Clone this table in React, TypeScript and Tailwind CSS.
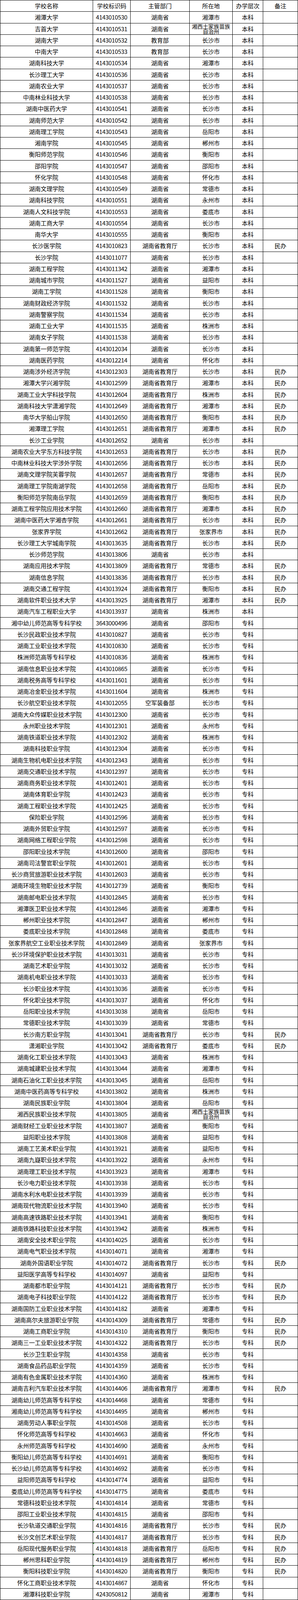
import React from 'react';

type Row = [string, string, string, string, string, string?];

const P = '湖南省';
const E = '湖南省教育厅';
const XX = '湘西土家族苗族自治州';

const rows: Row[] = [
  ['湘潭大学', '4143010530', P, '湘潭市', '本科'],
  ['吉首大学', '4143010531', P, XX, '本科'],
  ['湖南大学', '4143010532', '教育部', '长沙市', '本科'],
  ['中南大学', '4143010533', '教育部', '长沙市', '本科'],
  ['湖南科技大学', '4143010534', P, '湘潭市', '本科'],
  ['长沙理工大学', '4143010536', P, '长沙市', '本科'],
  ['湖南农业大学', '4143010537', P, '长沙市', '本科'],
  ['中南林业科技大学', '4143010538', P, '长沙市', '本科'],
  ['湖南中医药大学', '4143010541', P, '长沙市', '本科'],
  ['湖南师范大学', '4143010542', P, '长沙市', '本科'],
  ['湖南理工学院', '4143010543', P, '岳阳市', '本科'],
  ['湘南学院', '4143010545', P, '郴州市', '本科'],
  ['衡阳师范学院', '4143010546', P, '衡阳市', '本科'],
  ['邵阳学院', '4143010547', P, '邵阳市', '本科'],
  ['怀化学院', '4143010548', P, '怀化市', '本科'],
  ['湖南文理学院', '4143010549', P, '常德市', '本科'],
  ['湖南科技学院', '4143010551', P, '永州市', '本科'],
  ['湖南人文科技学院', '4143010553', P, '娄底市', '本科'],
  ['湖南工商大学', '4143010554', P, '长沙市', '本科'],
  ['南华大学', '4143010555', P, '衡阳市', '本科'],
  ['长沙医学院', '4143010823', E, '长沙市', '本科', '民办'],
  ['长沙学院', '4143011077', P, '长沙市', '本科'],
  ['湖南工程学院', '4143011342', P, '湘潭市', '本科'],
  ['湖南城市学院', '4143011527', P, '益阳市', '本科'],
  ['湖南工学院', '4143011528', P, '衡阳市', '本科'],
  ['湖南财政经济学院', '4143011532', P, '长沙市', '本科'],
  ['湖南警察学院', '4143011534', P, '长沙市', '本科'],
  ['湖南工业大学', '4143011535', P, '株洲市', '本科'],
  ['湖南女子学院', '4143011538', P, '长沙市', '本科'],
  ['湖南第一师范学院', '4143012034', P, '长沙市', '本科'],
  ['湖南医药学院', '4143012214', P, '怀化市', '本科'],
  ['湖南涉外经济学院', '4143012303', E, '长沙市', '本科', '民办'],
  ['湘潭大学兴湘学院', '4143012599', E, '湘潭市', '本科', '民办'],
  ['湖南工业大学科技学院', '4143012604', E, '株洲市', '本科', '民办'],
  ['湖南科技大学潇湘学院', '4143012649', E, '湘潭市', '本科', '民办'],
  ['南华大学船山学院', '4143012650', E, '衡阳市', '本科', '民办'],
  ['湘潭理工学院', '4143012651', E, '湘潭市', '本科', '民办'],
  ['长沙工业学院', '4143012652', P, '长沙市', '本科'],
  ['湖南农业大学东方科技学院', '4143012653', E, '长沙市', '本科', '民办'],
  ['中南林业科技大学涉外学院', '4143012656', E, '长沙市', '本科', '民办'],
  ['湖南文理学院芙蓉学院', '4143012657', E, '常德市', '本科', '民办'],
  ['湖南理工学院南湖学院', '4143012658', E, '岳阳市', '本科', '民办'],
  ['衡阳师范学院南岳学院', '4143012659', E, '衡阳市', '本科', '民办'],
  ['湖南工程学院应用技术学院', '4143012660', E, '湘潭市', '本科', '民办'],
  ['湖南中医药大学湘杏学院', '4143012661', E, '长沙市', '本科', '民办'],
  ['张家界学院', '4143012662', E, '张家界市', '本科', '民办'],
  ['长沙理工大学城南学院', '4143013635', E, '长沙市', '本科', '民办'],
  ['长沙师范学院', '4143013806', P, '长沙市', '本科'],
  ['湖南应用技术学院', '4143013809', E, '常德市', '本科', '民办'],
  ['湖南信息学院', '4143013836', E, '长沙市', '本科', '民办'],
  ['湖南交通工程学院', '4143013924', E, '衡阳市', '本科', '民办'],
  ['湖南软件职业技术大学', '4143013925', E, '湘潭市', '本科', '民办'],
  ['湖南汽车工程职业大学', '4143013937', P, '株洲市', '本科'],
  ['湘中幼儿师范高等专科学校', '3643000496', P, '邵阳市', '专科'],
  ['长沙民政职业技术学院', '4143010827', P, '长沙市', '专科'],
  ['湖南工业职业技术学院', '4143010830', P, '长沙市', '专科'],
  ['株洲师范高等专科学校', '4143010836', P, '株洲市', '专科'],
  ['湖南信息职业技术学院', '4143010865', P, '长沙市', '专科'],
  ['湖南税务高等专科学校', '4143011601', P, '长沙市', '专科'],
  ['湖南冶金职业技术学院', '4143011604', P, '株洲市', '专科'],
  ['长沙航空职业技术学院', '4143012055', '空军装备部', '长沙市', '专科'],
  ['湖南大众传媒职业技术学院', '4143012300', P, '长沙市', '专科'],
  ['永州职业技术学院', '4143012301', P, '永州市', '专科'],
  ['湖南铁道职业技术学院', '4143012302', P, '株洲市', '专科'],
  ['湖南科技职业学院', '4143012304', P, '长沙市', '专科'],
  ['湖南生物机电职业技术学院', '4143012343', P, '长沙市', '专科'],
  ['湖南交通职业技术学院', '4143012397', P, '长沙市', '专科'],
  ['湖南商务职业技术学院', '4143012401', P, '长沙市', '专科'],
  ['湖南体育职业学院', '4143012423', P, '长沙市', '专科'],
  ['湖南工程职业技术学院', '4143012425', P, '长沙市', '专科'],
  ['保险职业学院', '4143012596', P, '长沙市', '专科'],
  ['湖南外贸职业学院', '4143012597', P, '长沙市', '专科'],
  ['湖南网络工程职业学院', '4143012598', P, '长沙市', '专科'],
  ['邵阳职业技术学院', '4143012600', P, '邵阳市', '专科'],
  ['湖南司法警官职业学院', '4143012601', P, '长沙市', '专科'],
  ['长沙商贸旅游职业技术学院', '4143012603', P, '长沙市', '专科'],
  ['湖南环境生物职业技术学院', '4143012739', P, '衡阳市', '专科'],
  ['湖南邮电职业技术学院', '4143012845', P, '长沙市', '专科'],
  ['湘潭医卫职业技术学院', '4143012846', P, '湘潭市', '专科'],
  ['郴州职业技术学院', '4143012847', P, '郴州市', '专科'],
  ['娄底职业技术学院', '4143012848', P, '娄底市', '专科'],
  ['张家界航空工业职业技术学院', '4143012849', P, '张家界市', '专科'],
  ['长沙环境保护职业技术学院', '4143013031', P, '长沙市', '专科'],
  ['湖南艺术职业学院', '4143013032', P, '长沙市', '专科'],
  ['湖南机电职业技术学院', '4143013033', P, '长沙市', '专科'],
  ['长沙职业技术学院', '4143013036', P, '长沙市', '专科'],
  ['怀化职业技术学院', '4143013037', P, '怀化市', '专科'],
  ['岳阳职业技术学院', '4143013038', P, '岳阳市', '专科'],
  ['常德职业技术学院', '4143013039', P, '常德市', '专科'],
  ['长沙南方职业学院', '4143013041', E, '长沙市', '专科', '民办'],
  ['潇湘职业学院', '4143013042', E, '娄底市', '专科', '民办'],
  ['湖南化工职业技术学院', '4143013043', P, '株洲市', '专科'],
  ['湖南城建职业技术学院', '4143013044', P, '湘潭市', '专科'],
  ['湖南石油化工职业技术学院', '4143013045', P, '岳阳市', '专科'],
  ['湖南中医药高等专科学校', '4143013802', P, '株洲市', '专科'],
  ['湖南民族职业学院', '4143013804', P, '岳阳市', '专科'],
  ['湘西民族职业技术学院', '4143013805', P, XX, '专科'],
  ['湖南财经工业职业技术学院', '4143013807', P, '衡阳市', '专科'],
  ['益阳职业技术学院', '4143013808', P, '益阳市', '专科'],
  ['湖南工艺美术职业学院', '4143013921', P, '益阳市', '专科'],
  ['湖南九嶷职业技术学院', '4143013922', P, '永州市', '专科'],
  ['湖南理工职业技术学院', '4143013923', P, '湘潭市', '专科'],
  ['长沙电力职业技术学院', '4143013938', P, '长沙市', '专科'],
  ['湖南水利水电职业技术学院', '4143013939', P, '长沙市', '专科'],
  ['湖南现代物流职业技术学院', '4143013940', P, '长沙市', '专科'],
  ['湖南高速铁路职业技术学院', '4143013941', P, '衡阳市', '专科'],
  ['湖南铁路科技职业技术学院', '4143013942', P, '株洲市', '专科'],
  ['湖南安全技术职业学院', '4143014025', P, '长沙市', '专科'],
  ['湖南电气职业技术学院', '4143014071', P, '湘潭市', '专科'],
  ['湖南外国语职业学院', '4143014072', E, '长沙市', '专科', '民办'],
  ['益阳医学高等专科学校', '4143014097', P, '益阳市', '专科'],
  ['湖南都市职业学院', '4143014121', E, '长沙市', '专科', '民办'],
  ['湖南电子科技职业学院', '4143014122', E, '长沙市', '专科', '民办'],
  ['湖南国防工业职业技术学院', '4143014182', P, '湘潭市', '专科'],
  ['湖南高尔夫旅游职业学院', '4143014309', E, '常德市', '专科', '民办'],
  ['湖南工商职业学院', '4143014310', E, '衡阳市', '专科', '民办'],
  ['湖南三一工业职业技术学院', '4143014322', E, '长沙市', '专科', '民办'],
  ['长沙卫生职业学院', '4143014358', P, '长沙市', '专科'],
  ['湖南食品药品职业学院', '4143014359', P, '长沙市', '专科'],
  ['湖南有色金属职业技术学院', '4143014360', P, '株洲市', '专科'],
  ['湖南吉利汽车职业技术学院', '4143014406', E, '湘潭市', '专科', '民办'],
  ['湖南幼儿师范高等专科学校', '4143014468', P, '常德市', '专科'],
  ['湘南幼儿师范高等专科学校', '4143014495', P, '郴州市', '专科'],
  ['湖南劳动人事职业学院', '4143014508', P, '长沙市', '专科'],
  ['怀化师范高等专科学校', '4143014663', P, '怀化市', '专科'],
  ['永州师范高等专科学校', '4143014690', P, '永州市', '专科'],
  ['衡阳幼儿师范高等专科学校', '4143014691', P, '衡阳市', '专科'],
  ['长沙幼儿师范高等专科学校', '4143014692', P, '长沙市', '专科'],
  ['益阳师范高等专科学校', '4143014774', P, '益阳市', '专科'],
  ['娄底幼儿师范高等专科学校', '4143014775', P, '娄底市', '专科'],
  ['常德科技职业技术学院', '4143014814', P, '常德市', '专科'],
  ['邵阳工业职业技术学院', '4143014815', P, '邵阳市', '专科'],
  ['长沙轨道交通职业学院', '4143014816', E, '长沙市', '专科', '民办'],
  ['长沙文创艺术职业学院', '4143014817', E, '长沙市', '专科', '民办'],
  ['岳阳现代服务职业学院', '4143014818', E, '岳阳市', '专科', '民办'],
  ['郴州思科职业学院', '4143014819', E, '郴州市', '专科', '民办'],
  ['衡阳科技职业学院', '4143014820', E, '衡阳市', '专科', '民办'],
  ['怀化工商职业技术学院', '4143014867', P, '怀化市', '专科'],
  ['湘潭科技职业学院', '4243050812', P, '湘潭市', '专科'],
];

// codes stored as text in the sheet (green corner marker)
const textCodes = new Set(['4143014814', '4143014815', '4143014816', '4143014817', '4143014818', '4143014819', '4143014820']);

const cell = 'flex items-center justify-center text-center border-r border-black';

function TableRow({ row, header }: { row: Row; header?: boolean }) {
  const [name, code, dept, loc, level, note] = row;
  const twoLine = loc.length > 6;
  return (
    <div className="grid grid-cols-[237px_96px_151px_110px_78px_89px] h-[29.25px] border-b border-black">
      <div className={cell}>{name}</div>
      <div className={`${cell} relative ${header ? '' : 'tracking-[-0.3px]'}`}>
        {textCodes.has(code) && (
          <span className="absolute left-0 top-0 w-0 h-0 border-t-[3px] border-t-[#1e8c1e] border-r-[4px] border-r-transparent" />
        )}
        {code}
      </div>
      <div className={cell}>{dept}</div>
      <div className={`${cell} px-1 ${twoLine ? 'text-[14px] leading-[13px]' : ''}`}>{loc}</div>
      <div className={cell}>{level}</div>
      <div className={cell}>{note ?? ''}</div>
    </div>
  );
}

export default function App() {
  return (
    <div className="w-[762px] bg-white text-black text-[15px] leading-[18px] font-['Noto_Sans_CJK_SC','Noto_Sans',sans-serif]">
      <div className="border-l border-t border-black">
        <TableRow header row={['学校名称', '学校标识码', '主管部门', '所在地', '办学层次', '备注']} />
        {rows.map((r) => (
          <TableRow key={r[1]} row={r} />
        ))}
      </div>
    </div>
  );
}
